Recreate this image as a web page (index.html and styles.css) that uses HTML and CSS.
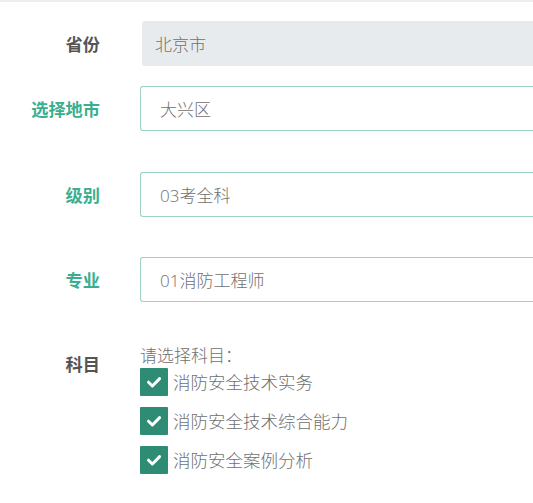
FILE: index.html
```html
<!DOCTYPE html>
<html lang="zh-CN">
<head>
<meta charset="utf-8">
<title>选择</title>
<link rel="stylesheet" href="styles.css">
</head>
<body>
<div class="form">
  <div class="row row-province">
    <div class="label">省份</div>
    <div class="field field-disabled">北京市</div>
  </div>
  <div class="row row-city">
    <div class="label label-active">选择地市</div>
    <div class="field">大兴区</div>
  </div>
  <div class="row row-level">
    <div class="label label-active">级别</div>
    <div class="field">03考全科</div>
  </div>
  <div class="row row-major">
    <div class="label label-active">专业</div>
    <div class="field">01消防工程师</div>
  </div>
  <div class="row row-subject">
    <div class="label label-subject">科目</div>
    <div class="subjects">
      <div class="hint">请选择科目：</div>
      <div class="check-item"><span class="box"><svg viewBox="0 0 28 28" width="28" height="28"><path d="M8.5 14.2 L12.4 18 L19.6 10.6" fill="none" stroke="#fff" stroke-width="3" stroke-linecap="round" stroke-linejoin="round"/></svg></span><span class="check-text">消防安全技术实务</span></div>
      <div class="check-item"><span class="box"><svg viewBox="0 0 28 28" width="28" height="28"><path d="M8.5 14.2 L12.4 18 L19.6 10.6" fill="none" stroke="#fff" stroke-width="3" stroke-linecap="round" stroke-linejoin="round"/></svg></span><span class="check-text">消防安全技术综合能力</span></div>
      <div class="check-item"><span class="box"><svg viewBox="0 0 28 28" width="28" height="28"><path d="M8.5 14.2 L12.4 18 L19.6 10.6" fill="none" stroke="#fff" stroke-width="3" stroke-linecap="round" stroke-linejoin="round"/></svg></span><span class="check-text">消防安全案例分析</span></div>
    </div>
  </div>
</div>
</body>
</html>
```

FILE: styles.css
```css
html, body {
  margin: 0;
  padding: 0;
  background: #ffffff;
}
body {
  font-family: "Open Sans", "Noto Sans CJK SC", sans-serif;
  color: #666666;
}
.form {
  border-top: 2px solid #eeeeee;
  padding-top: 19px;
}
.row {
  display: grid;
  grid-template-columns: 100px 1fr;
  column-gap: 40px;
  align-items: center;
}
.row-province { margin-bottom: 20px; }
.row-city { margin-bottom: 41px; }
.row-level { margin-bottom: 40px; }
.row-major { margin-bottom: 44px; }
.row-subject { align-items: start; }

.label {
  text-align: right;
  font-family: "Noto Sans CJK SC", sans-serif;
  font-weight: bold;
  font-size: 17.2px;
  color: #555555;
  line-height: 24px;
}
.label-active {
  color: #3aae8e;
}
.label-subject {
  padding-top: 6px;
}
.field {
  box-sizing: border-box;
  height: 45px;
  border: 1px solid #9dd3c3;
  border-right: none;
  border-radius: 3px 0 0 3px;
  padding-left: 19px;
  display: flex;
  align-items: center;
  font-size: 17px;
  font-weight: 300;
  color: #6f6f6f;
  background: #ffffff;
}
.field-disabled {
  margin-left: 2px;
  border-color: #e8ebee;
  background: #e8ebee;
  padding-left: 12px;
}
.subjects {
  display: flex;
  flex-direction: column;
  gap: 11px;
}
.hint {
  font-size: 17px;
  font-weight: 300;
  line-height: 20px;
  color: #6f6f6f;
  margin-bottom: -9px;
}
.check-item {
  display: flex;
  align-items: center;
  gap: 5px;
  height: 28px;
}
.box {
  width: 28px;
  height: 28px;
  background: #2e8c74;
  border-radius: 1px;
  display: block;
  flex: none;
}
.box svg {
  display: block;
}
.check-text {
  font-size: 17.5px;
  font-weight: 300;
  color: #6f6f6f;
  line-height: 28px;
}
```
